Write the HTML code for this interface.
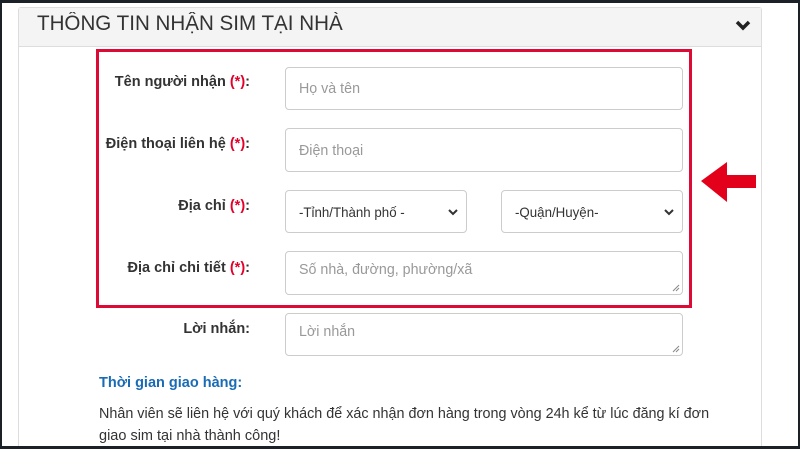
<!DOCTYPE html>
<html><head><meta charset="utf-8"><style>
*{box-sizing:border-box;margin:0;padding:0}
body{width:800px;height:449px;background:#1b2127;position:relative;overflow:hidden;font-family:"Liberation Sans",Arial,sans-serif;color:#333}
.page{position:absolute;left:2px;top:3px;width:796px;height:443px;background:#fff}
.panel{position:absolute;left:18px;top:7px;width:744px;height:439px;border:1px solid #ddd;border-bottom:none;border-radius:3px 3px 0 0;background:#fff}
.head{position:absolute;left:0;top:0;width:742px;height:39px;background:#f4f4f4;border-bottom:1px solid #ddd}
.t{position:absolute;white-space:nowrap;transform-origin:left center}
.title{font-size:21px;color:#333;transform:scaleX(.98)}
.lbl{font-size:14.5px;font-weight:bold;color:#333;transform-origin:right center;text-align:right}
.red{color:#e4002b}
.box{position:absolute;border:1px solid #ccc;border-radius:4px;background:#fff}
.ph{position:absolute;left:13px;font-size:15px;color:#999;white-space:nowrap;transform:scaleX(.95);transform-origin:left center}
.sel .ph{color:#333;font-size:14px}
.frame{position:absolute;left:96px;top:49px;width:596px;height:259px;border:3px solid #dc0a35}
</style></head><body>
<div class="page"></div>
<div class="panel"><div class="head"></div></div>
<div class="t title" style="left:37px;top:12px">THÔNG TIN NHẬN SIM TẠI NHÀ</div>
<svg style="position:absolute;left:735px;top:20px" width="16" height="12" viewBox="0 0 16 12"><path d="M2 2 L8 8 L14 2" fill="none" stroke="#222" stroke-width="3.5"/></svg>
<div class="frame"></div>
<div class="t lbl" style="right:550px;top:74px">Tên người nhận <span class="red">(*)</span>:</div>
<div class="t lbl" style="right:550px;top:136px">Điện thoại liên hệ <span class="red">(*)</span>:</div>
<div class="t lbl" style="right:550px;top:198px">Địa chỉ <span class="red">(*)</span>:</div>
<div class="t lbl" style="right:550px;top:260px">Địa chỉ chi tiết <span class="red">(*)</span>:</div>
<div class="t lbl" style="right:550px;top:321px">Lời nhắn:</div>
<div class="box" style="left:285px;top:67px;width:398px;height:43px"><div class="ph" style="top:12px">Họ và tên</div></div>
<div class="box" style="left:285px;top:128px;width:398px;height:44px"><div class="ph" style="top:13px">Điện thoại</div></div>
<div class="box sel" style="left:285px;top:190px;width:182px;height:43px"><div class="ph" style="top:13px">-Tỉnh/Thành phố -</div><svg style="position:absolute;right:8px;top:18px" width="10" height="7"><path d="M1 1 L5 5 L9 1" fill="none" stroke="#333" stroke-width="2"/></svg></div>
<div class="box sel" style="left:501px;top:190px;width:182px;height:43px"><div class="ph" style="top:13px">-Quận/Huyện-</div><svg style="position:absolute;right:8px;top:18px" width="10" height="7"><path d="M1 1 L5 5 L9 1" fill="none" stroke="#333" stroke-width="2"/></svg></div>
<div class="box" style="left:285px;top:251px;width:398px;height:44px"><div class="ph" style="top:9px">Số nhà, đường, phường/xã</div><svg style="position:absolute;right:2px;bottom:2px" width="8" height="8"><path d="M7 1 L1 7 M7 4 L4 7" stroke="#888"/></svg></div>
<div class="box" style="left:285px;top:313px;width:398px;height:43px"><div class="ph" style="top:9px">Lời nhắn</div><svg style="position:absolute;right:2px;bottom:2px" width="8" height="8"><path d="M7 1 L1 7 M7 4 L4 7" stroke="#888"/></svg></div>
<div class="t" style="left:99px;top:375px;font-size:14.5px;font-weight:bold;color:#1a6bb5">Thời gian giao hàng:</div>
<div class="t" style="left:99px;top:406px;font-size:14.5px;color:#333;transform:scaleX(.99)">Nhân viên sẽ liên hệ với quý khách để xác nhận đơn hàng trong vòng 24h kể từ lúc đăng kí đơn</div>
<div class="t" style="left:99px;top:428px;font-size:14.5px;color:#333">giao sim tại nhà thành công!</div>
<div style="position:absolute;left:0;top:446px;width:800px;height:3px;background:#1b2127"></div>
<svg style="position:absolute;left:700px;top:161px" width="58" height="42"><path d="M1 20 L27 1 L27 14 L56 14 L56 27 L27 27 L27 41 Z" fill="#e3001b"/></svg>
</body></html>
